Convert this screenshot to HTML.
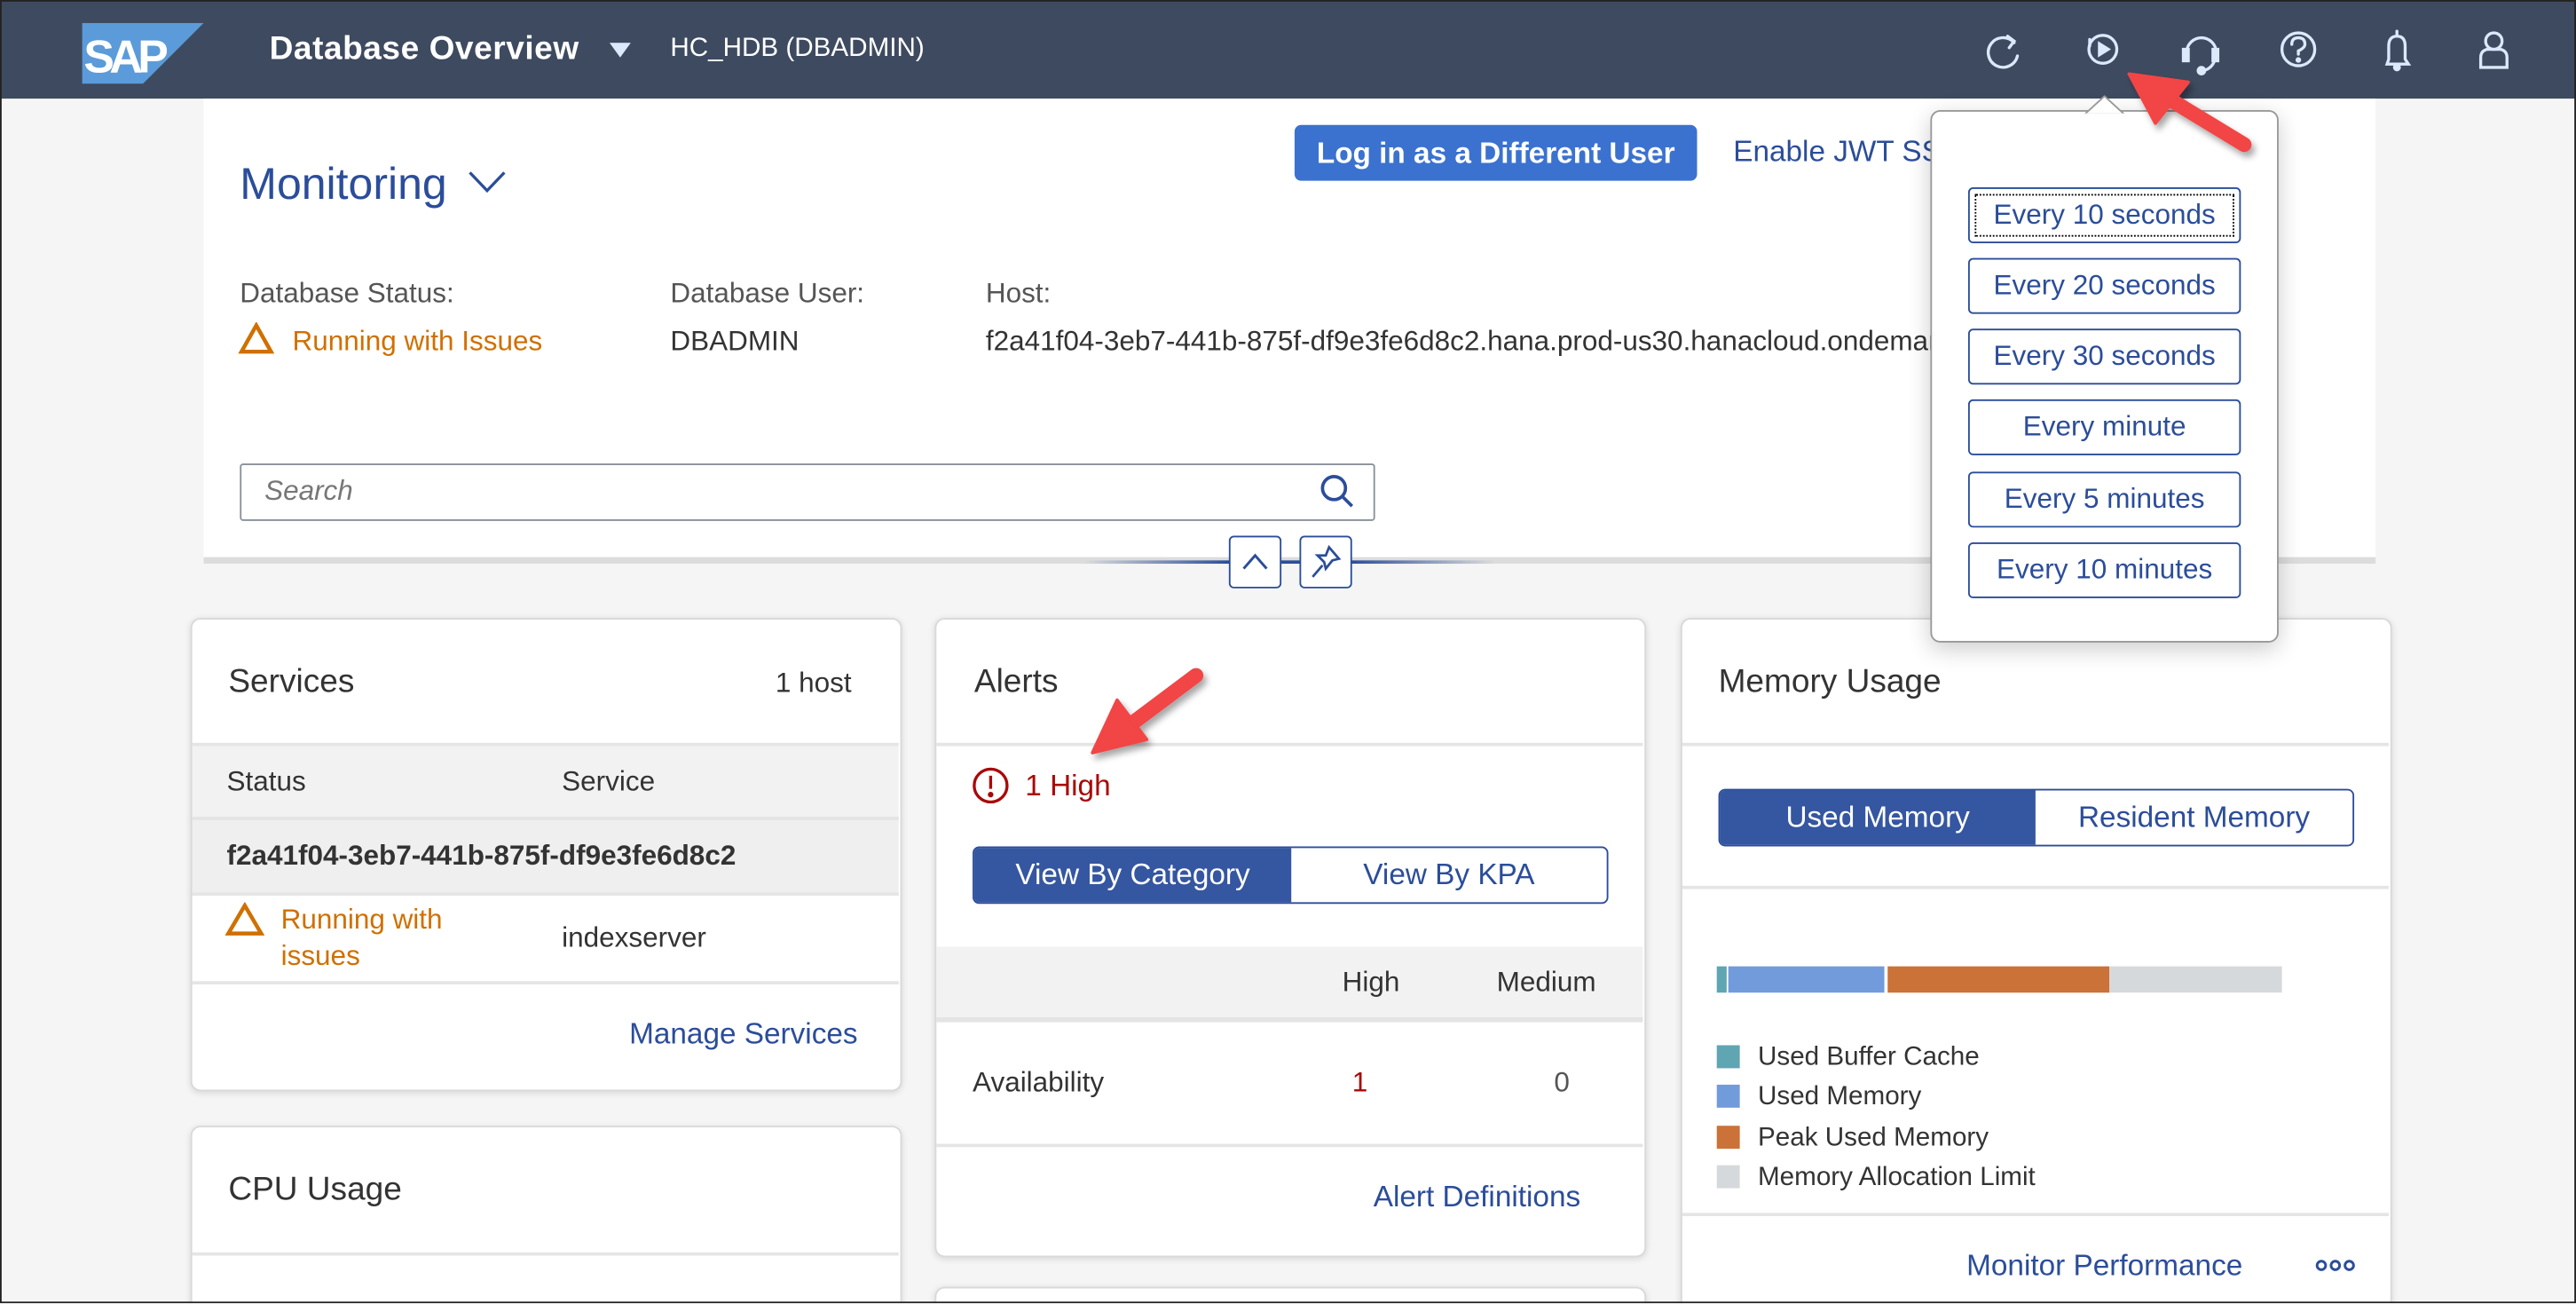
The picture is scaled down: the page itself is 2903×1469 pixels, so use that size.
<!DOCTYPE html>
<html><head><meta charset="utf-8">
<style>
html,body{margin:0;padding:0;width:2903px;height:1469px;overflow:hidden;background:#f5f5f5;}
#s{position:absolute;left:0;top:0;width:1568px;height:793px;transform:scale(1.85140);transform-origin:0 0;background:#f5f5f5;font-family:"Liberation Sans",sans-serif;overflow:hidden;}
.a{position:absolute;}
.t{position:absolute;white-space:nowrap;line-height:1;}
.card{position:absolute;background:#fff;border:1px solid #d9d9d9;border-radius:6px;box-shadow:0 1px 4px rgba(0,0,0,0.12);}
.hr{position:absolute;height:2px;background:#e5e5e5;}
.blue{color:#2b4d9a;}
.pb{position:absolute;left:1198px;width:164px;height:32px;border:1px solid #2b4d9a;border-radius:3px;background:#fff;color:#2b4d9a;font-size:17px;line-height:32px;text-align:center;}
</style></head><body>
<div id="s">
<div class="a" style="left:0;top:0;width:1568px;height:60px;background:#3e4a5f;"></div>
<svg class="a" style="left:50px;top:14px" width="74" height="37" viewBox="0 0 74 37"><polygon points="0,0 74,0 37,37 0,37" fill="#5b9bd9"/><text x="1" y="30" font-family="Liberation Sans" font-weight="bold" font-size="28" fill="#fff" letter-spacing="-3">SAP</text></svg>
<div class="t" style="left:164px;top:20px;font-size:20px;font-weight:bold;color:#fff;letter-spacing:0.3px">Database Overview</div>
<svg class="a" style="left:371px;top:26px" width="13" height="10"><polygon points="0,0 13,0 6.5,9" fill="#dce8fb"/></svg>
<div class="t" style="left:408px;top:22px;font-size:16px;color:#fff">HC_HDB (DBADMIN)</div>
<svg class="a" style="left:1205px;top:14px" width="330" height="34" fill="none" stroke="#dce8fb" stroke-width="1.8" stroke-linecap="round">
 <path d="M21 12 A9 9 0 1 0 23 20"/><path d="M17 8 L21 11 L18 15"/>
 <circle cx="75" cy="16" r="8.5"/><polygon points="72,11 80,16 72,21" fill="#dce8fb" stroke="none"/><path d="M67 14 L67 10"/>
 <path d="M126 18 A9 9 0 0 1 144 18"/><rect x="124" y="16" width="3" height="7" fill="#dce8fb"/><rect x="142" y="16" width="3" height="7" fill="#dce8fb"/><path d="M143 23 Q141 28 136 29"/><circle cx="135" cy="29" r="2" fill="#dce8fb"/>
 <circle cx="194" cy="16" r="10"/><path d="M190 13 Q190 9 194 9 Q198 9 198 13 Q198 15 194 17 L194 19"/><circle cx="194" cy="22.5" r="0.8" fill="#dce8fb"/>
 <path d="M248 25 L249 22 L249 14 Q249 8 254 8 Q259 8 259 14 L259 22 L261 25 Z"/><path d="M254 5 L254 8"/><circle cx="254" cy="27" r="1.5" fill="#dce8fb"/>
 <circle cx="313" cy="11" r="5"/><path d="M305 27 L305 21 Q305 17 309 16 L317 16 Q321 17 321 21 L321 27 Z"/>
</svg>
<div class="a" style="left:124px;top:60px;width:1322px;height:280px;background:#fff;"></div>
<div class="a" style="left:124px;top:339px;width:1322px;height:4px;background:#dcdcdc;"></div>
<div class="a" style="left:660px;top:341px;width:250px;height:2px;background:linear-gradient(90deg,rgba(43,77,154,0),#2b4d9a 35%,#2b4d9a 65%,rgba(43,77,154,0));"></div>
<div class="t blue" style="left:146px;top:99px;font-size:27px">Monitoring</div>
<svg class="a" style="left:285px;top:104px" width="23" height="14" fill="none" stroke="#2b4d9a" stroke-width="1.8"><path d="M1 1 L11.5 12 L22 1"/></svg>
<div class="a" style="left:788px;top:76px;width:245px;height:34px;background:#3b72cf;border-radius:4px;color:#fff;font-weight:bold;font-size:18px;line-height:34px;text-align:center;">Log in as a Different User</div>
<div class="t blue" style="left:1055px;top:83px;font-size:18px">Enable JWT SSO</div>
<div class="t" style="left:146px;top:170px;font-size:17px;color:#555">Database Status:</div>
<div class="t" style="left:408px;top:170px;font-size:17px;color:#555">Database User:</div>
<div class="t" style="left:600px;top:170px;font-size:17px;color:#555">Host:</div>
<svg class="a" style="left:145px;top:196px" width="22" height="20" fill="none" stroke="#d07000" stroke-width="2.4"><path d="M11 2 L20 18 L2 18 Z"/></svg>
<div class="t" style="left:178px;top:199px;font-size:17px;color:#d07000">Running with Issues</div>
<div class="t" style="left:408px;top:199px;font-size:17px;color:#333">DBADMIN</div>
<div class="t" style="left:600px;top:199px;font-size:17px;color:#333">f2a41f04-3eb7-441b-875f-df9e3fe6d8c2.hana.prod-us30.hanacloud.ondemand.com</div>
<div class="a" style="left:146px;top:282px;width:689px;height:33px;border:1px solid #89919a;border-radius:2px;background:#fff;"></div>
<div class="t" style="left:161px;top:290px;font-size:17px;color:#777;font-style:italic">Search</div>
<svg class="a" style="left:803px;top:288px" width="22" height="22" fill="none" stroke="#2b4d9a" stroke-width="2"><circle cx="9" cy="9" r="7"/><path d="M14 14 L20 20"/></svg>
<div class="a" style="left:748px;top:326px;width:30px;height:30px;border:1px solid #2b4d9a;border-radius:3px;background:#fff;"></div>
<svg class="a" style="left:748px;top:326px" width="32" height="32" fill="none" stroke="#2b4d9a" stroke-width="1.6"><path d="M9 20 L16 12 L23 20"/></svg>
<div class="a" style="left:791px;top:326px;width:30px;height:30px;border:1px solid #2b4d9a;border-radius:3px;background:#fff;"></div>
<svg class="a" style="left:791px;top:326px" width="32" height="32" fill="none" stroke="#2b4d9a" stroke-width="1.5"><path d="M18 7 L24 14 L20 15 L16 20 L15 16 L11 12 L16 12 Z"/><path d="M14 18 L8 25"/></svg>

<div class="card" style="left:116px;top:376px;width:431px;height:286px;"></div>
<div class="t" style="left:139px;top:405px;font-size:20px;color:#333">Services</div>
<div class="t" style="left:472px;top:407px;font-size:17px;color:#333">1 host</div>
<div class="hr" style="left:117px;top:452px;width:430px;"></div>
<div class="a" style="left:117px;top:454px;width:430px;height:44px;background:#f2f2f2;"></div>
<div class="t" style="left:138px;top:467px;font-size:17px;color:#333">Status</div>
<div class="t" style="left:342px;top:467px;font-size:17px;color:#333">Service</div>
<div class="a" style="left:117px;top:497px;width:430px;height:46px;background:#efefef;border-top:2px solid #e4e4e4;"></div>
<div class="t" style="left:138px;top:512px;font-size:17px;font-weight:bold;color:#333">f2a41f04-3eb7-441b-875f-df9e3fe6d8c2</div>
<div class="hr" style="left:117px;top:543px;width:430px;"></div>
<svg class="a" style="left:137px;top:549px" width="24" height="22" fill="none" stroke="#d07000" stroke-width="2.4"><path d="M12 2 L22 19 L2 19 Z"/></svg>
<div class="t" style="left:171px;top:551px;font-size:17px;color:#d07000">Running with</div>
<div class="t" style="left:171px;top:573px;font-size:17px;color:#d07000">issues</div>
<div class="t" style="left:342px;top:562px;font-size:17px;color:#333">indexserver</div>
<div class="hr" style="left:117px;top:597px;width:430px;"></div>
<div class="t blue" style="left:383px;top:620px;font-size:18px">Manage Services</div>

<div class="card" style="left:116px;top:685px;width:431px;height:140px;"></div>
<div class="t" style="left:139px;top:714px;font-size:20px;color:#333">CPU Usage</div>
<div class="hr" style="left:117px;top:762px;width:430px;"></div>

<div class="card" style="left:569px;top:376px;width:431px;height:387px;"></div>
<div class="card" style="left:569px;top:783px;width:431px;height:60px;"></div>
<div class="t" style="left:593px;top:405px;font-size:20px;color:#333">Alerts</div>
<div class="hr" style="left:570px;top:452px;width:430px;"></div>
<svg class="a" style="left:591px;top:466px" width="24" height="24" fill="none" stroke="#aa0808" stroke-width="1.8"><circle cx="12" cy="12" r="10"/><path d="M12 6 L12 14"/><circle cx="12" cy="17.5" r="0.8" fill="#aa0808"/></svg>
<div class="t" style="left:624px;top:469px;font-size:18px;color:#aa0808">1 High</div>
<div class="a" style="left:592px;top:515px;width:385px;height:33px;border:1px solid #2b4d9a;border-radius:4px;background:#fff;overflow:hidden;">
 <div class="a" style="left:0;top:0;width:193px;height:33px;background:#3556a0;color:#fff;font-size:18px;line-height:33px;text-align:center;">View By Category</div>
 <div class="a" style="left:193px;top:0;width:192px;height:33px;color:#2b4d9a;font-size:18px;line-height:33px;text-align:center;">View By KPA</div>
</div>
<div class="a" style="left:570px;top:576px;width:430px;height:43px;background:#f2f2f2;border-bottom:3px solid #e4e4e4;"></div>
<div class="t" style="left:817px;top:589px;font-size:17px;color:#333">High</div>
<div class="t" style="left:911px;top:589px;font-size:17px;color:#333">Medium</div>
<div class="t" style="left:592px;top:650px;font-size:17px;color:#333">Availability</div>
<div class="t" style="left:823px;top:650px;font-size:17px;color:#aa0808">1</div>
<div class="t" style="left:946px;top:650px;font-size:17px;color:#555">0</div>
<div class="hr" style="left:570px;top:696px;width:430px;"></div>
<div class="t blue" style="left:836px;top:719px;font-size:18px">Alert Definitions</div>

<div class="card" style="left:1023px;top:376px;width:431px;height:450px;"></div>
<div class="t" style="left:1046px;top:405px;font-size:20px;color:#333">Memory Usage</div>
<div class="hr" style="left:1024px;top:452px;width:430px;"></div>
<div class="a" style="left:1046px;top:480px;width:385px;height:33px;border:1px solid #2b4d9a;border-radius:4px;background:#fff;overflow:hidden;">
 <div class="a" style="left:0;top:0;width:192px;height:33px;background:#3556a0;color:#fff;font-size:18px;line-height:33px;text-align:center;">Used Memory</div>
 <div class="a" style="left:192px;top:0;width:193px;height:33px;color:#2b4d9a;font-size:18px;line-height:33px;text-align:center;">Resident Memory</div>
</div>
<div class="hr" style="left:1024px;top:539px;width:430px;"></div>
<div class="a" style="left:1045px;top:588px;width:6px;height:16px;background:#5fa5b2;"></div>
<div class="a" style="left:1052px;top:588px;width:95px;height:16px;background:#729bdb;"></div>
<div class="a" style="left:1149px;top:588px;width:135px;height:16px;background:#cb7238;"></div>
<div class="a" style="left:1284px;top:588px;width:105px;height:16px;background:#d6d9dc;"></div>
<div class="a" style="left:1045px;top:636px;width:14px;height:14px;background:#5fa5b2;"></div>
<div class="a" style="left:1045px;top:660px;width:14px;height:14px;background:#729bdb;"></div>
<div class="a" style="left:1045px;top:685px;width:14px;height:14px;background:#cb7238;"></div>
<div class="a" style="left:1045px;top:709px;width:14px;height:14px;background:#d6d9dc;"></div>
<div class="t" style="left:1070px;top:636px;font-size:16px;color:#333">Used Buffer Cache</div>
<div class="t" style="left:1070px;top:660px;font-size:16px;color:#333">Used Memory</div>
<div class="t" style="left:1070px;top:685px;font-size:16px;color:#333">Peak Used Memory</div>
<div class="t" style="left:1070px;top:709px;font-size:16px;color:#333">Memory Allocation Limit</div>
<div class="hr" style="left:1024px;top:738px;width:430px;"></div>
<div class="t blue" style="left:1197px;top:761px;font-size:18px">Monitor Performance</div>
<svg class="a" style="left:1409px;top:765px" width="26" height="10" fill="none" stroke="#2b4d9a" stroke-width="1.6"><circle cx="4" cy="5" r="2.6"/><circle cx="12.5" cy="5" r="2.6"/><circle cx="21" cy="5" r="2.6"/></svg>

<div class="a" style="left:1175px;top:67px;width:210px;height:322px;background:#fff;border:1px solid #999;border-radius:6px;box-shadow:0 4px 14px rgba(0,0,0,0.2);"></div>
<svg class="a" style="left:1268px;top:58px" width="26" height="12"><polygon points="1,11.5 13,0.5 25,11.5" fill="#fff" stroke="#999" stroke-width="1"/><rect x="0" y="11" width="26" height="2" fill="#fff"/></svg>
<div class="pb" style="top:114px;"><div class="a" style="left:3px;top:3px;right:3px;bottom:3px;border:1px dotted #000;"></div>Every 10 seconds</div>
<div class="pb" style="top:157px;">Every 20 seconds</div>
<div class="pb" style="top:200px;">Every 30 seconds</div>
<div class="pb" style="top:243px;">Every minute</div>
<div class="pb" style="top:287px;">Every 5 minutes</div>
<div class="pb" style="top:330px;">Every 10 minutes</div>

<svg class="a" style="left:0;top:0" width="1568" height="793">
 <defs><filter id="sh" x="-20%" y="-20%" width="140%" height="140%"><feDropShadow dx="2" dy="3" stdDeviation="2" flood-color="#000" flood-opacity="0.35"/></filter></defs>
 <g filter="url(#sh)" fill="#f24444" stroke="#f24444">
  <path d="M1366 88 L1320 60" stroke-width="9" stroke-linecap="round"/>
  <polygon points="1296,45 1332,50 1312,75" stroke-width="2" stroke-linejoin="round"/>
  <path d="M728 411 L688 441" stroke-width="9" stroke-linecap="round"/>
  <polygon points="665,458 680,426 698,450" stroke-width="2" stroke-linejoin="round"/>
 </g>
</svg>
<div class="a" style="left:0;top:0;width:1566px;height:791px;border:1px solid #222;"></div>
</div>
</body></html>
